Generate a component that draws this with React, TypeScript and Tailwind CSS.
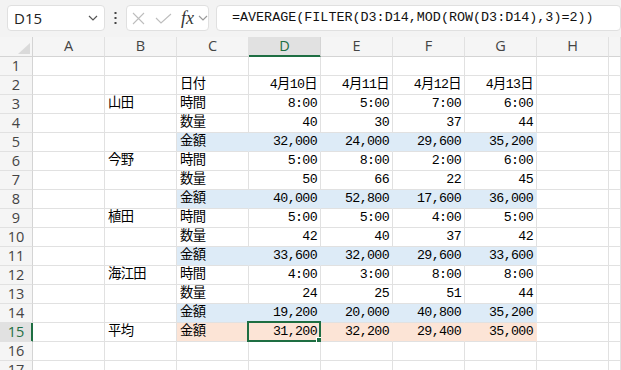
import React from "react";

type Fill = "none" | "blue" | "orange";
type Row = { n: number; b?: string; c?: string; v?: string[]; fill?: Fill };

const rows: Row[] = [
  { n: 1 },
  { n: 2, c: "日付", v: ["4月10日", "4月11日", "4月12日", "4月13日"] },
  { n: 3, b: "山田", c: "時間", v: ["8:00", "5:00", "7:00", "6:00"] },
  { n: 4, c: "数量", v: ["40", "30", "37", "44"] },
  { n: 5, c: "金額", v: ["32,000", "24,000", "29,600", "35,200"], fill: "blue" },
  { n: 6, b: "今野", c: "時間", v: ["5:00", "8:00", "2:00", "6:00"] },
  { n: 7, c: "数量", v: ["50", "66", "22", "45"] },
  { n: 8, c: "金額", v: ["40,000", "52,800", "17,600", "36,000"], fill: "blue" },
  { n: 9, b: "植田", c: "時間", v: ["5:00", "5:00", "4:00", "5:00"] },
  { n: 10, c: "数量", v: ["42", "40", "37", "42"] },
  { n: 11, c: "金額", v: ["33,600", "32,000", "29,600", "33,600"], fill: "blue" },
  { n: 12, b: "海江田", c: "時間", v: ["4:00", "3:00", "8:00", "8:00"] },
  { n: 13, c: "数量", v: ["24", "25", "51", "44"] },
  { n: 14, c: "金額", v: ["19,200", "20,000", "40,800", "35,200"], fill: "blue" },
  { n: 15, b: "平均", c: "金額", v: ["31,200", "32,200", "29,400", "35,000"], fill: "orange" },
  { n: 16 },
  { n: 17 },
];

const cols = ["A", "B", "C", "D", "E", "F", "G", "H", ""];

function Chevron({ color }: { color: string }) {
  return (
    <svg width="10" height="6" viewBox="0 0 10 6" fill="none">
      <path d="M1 1 L5 5 L9 1" stroke={color} strokeWidth="1.2" />
    </svg>
  );
}

function Cell({
  text,
  align,
  fill,
  selected,
}: {
  text?: string;
  align: "left" | "right";
  fill?: Fill;
  selected?: boolean;
}) {
  const bg =
    fill === "blue"
      ? "bg-[#ddebf7] border-r-[#ddebf7]"
      : fill === "orange"
      ? "bg-[#fce4d6] border-r-[#fce4d6]"
      : "bg-white border-r-[#e1e1e1]";
  return (
    <div
      className={`relative h-[19px] border-r border-b border-b-[#e1e1e1] ${bg} flex items-center px-[3px] ${
        align === "right" ? "justify-end" : "justify-start"
      }`}
    >
      <span className="whitespace-nowrap text-[13.3px] leading-none tracking-[-0.65px] text-[#000] font-['Liberation_Mono','Noto_Sans_CJK_JP',monospace]">
        {text}
      </span>
      {selected && (
        <>
          <div className="absolute left-[-2px] top-[-2px] right-[-1px] bottom-[-1px] border-2 border-[#1e6e42] pointer-events-none" />
          <div className="absolute right-[-3px] bottom-[-3px] w-[7px] h-[7px] bg-[#1e6e42] border border-white" />
        </>
      )}
    </div>
  );
}

export default function App() {
  return (
    <div className="w-[621px] h-[370px] overflow-hidden bg-white font-['Open_Sans','Noto_Sans',sans-serif]">
      {/* formula bar */}
      <div className="h-[37px] bg-[#f3f3f3] flex items-start pt-[5px] pl-[7px]">
        <div className="w-[101px] h-[26px] rounded-[4px] border border-[#e0e0e0] bg-white flex items-center pl-[6px] pr-[6px] justify-between">
          <span className="text-[15px] text-[#222] leading-none">D15</span>
          <Chevron color="#555" />
        </div>
        <div className="w-[22px] h-[26px] flex items-center justify-center">
          <svg width="3" height="12" viewBox="0 0 3 12">
            <rect x="0.5" y="0" width="2" height="2" fill="#444" />
            <rect x="0.5" y="5" width="2" height="2" fill="#444" />
            <rect x="0.5" y="10" width="2" height="2" fill="#444" />
          </svg>
        </div>
        <div className="w-[83px] h-[26px] rounded-[4px] border border-[#e0e0e0] bg-white flex items-center pl-[5px]">
          <svg width="13" height="13" viewBox="0 0 13 13" fill="none">
            <path d="M1 1 L12 12 M12 1 L1 12" stroke="#bdbdbd" strokeWidth="1.1" />
          </svg>
          <svg width="17" height="11" viewBox="0 0 17 11" fill="none" className="ml-[10px]">
            <path d="M1 5 L6 10 L16 1" stroke="#bdbdbd" strokeWidth="1.1" />
          </svg>
          <span className="ml-[9px] text-[18px] leading-none italic text-[#333] font-['Liberation_Serif',serif]">
            fx
          </span>
          <span className="ml-[4px] flex items-center">
            <Chevron color="#9a9a9a" />
          </span>
        </div>
        <div className="ml-[7px] w-[420px] h-[26px] rounded-[4px] border border-[#e0e0e0] bg-white flex items-center pl-[15px]">
          <span className="text-[13.4px] leading-none text-[#111] whitespace-nowrap font-['Liberation_Mono',monospace]">
            =AVERAGE(FILTER(D3:D14,MOD(ROW(D3:D14),3)=2))
          </span>
        </div>
      </div>

      {/* grid */}
      <div className="grid grid-cols-[33px_repeat(8,72px)_1fr]">
        {/* header row */}
        <div className="relative h-[20px] bg-[#f5f5f5] border-r border-b border-[#d4d4d4]">
          <svg width="12" height="11" viewBox="0 0 12 11" className="absolute left-[18px] top-[6px]">
            <path d="M12 0 L12 11 L0 11 Z" fill="#dadada" />
          </svg>
        </div>
        {cols.map((c, i) => {
          const sel = c === "D";
          return (
            <div
              key={i}
              className={`h-[20px] flex items-center justify-center text-[14.5px] leading-none ${
                sel
                  ? "bg-[#e1e1e1] text-[#1e6e42] border-b border-b-[#1e6e42] shadow-[inset_0_-1px_0_#1e6e42] border-r border-r-[#d4d4d4]"
                  : "bg-[#f5f5f5] text-[#444] border-r border-b border-[#e1e1e1] border-b-[#d4d4d4]"
              }`}
            >
              {c}
            </div>
          );
        })}
        {rows.map((r) => {
          const sel = r.n === 15;
          return (
            <React.Fragment key={r.n}>
              <div
                className={`h-[19px] flex items-center justify-center text-[14.5px] leading-none border-b border-b-[#e1e1e1] ${
                  sel
                    ? "bg-[#e1e1e1] text-[#1e6e42] border-r border-r-[#1e6e42] shadow-[inset_-1px_0_0_#1e6e42]"
                    : "bg-[#f5f5f5] text-[#444] border-r border-r-[#d4d4d4]"
                }`}
              >
                {r.n}
              </div>
              <Cell align="left" />
              <Cell align="left" text={r.b} />
              <Cell align="left" text={r.c} fill={r.fill} />
              {[0, 1, 2, 3].map((k) => (
                <Cell
                  key={k}
                  align="right"
                  text={r.v ? r.v[k] : undefined}
                  fill={r.fill}
                  selected={sel && k === 0}
                />
              ))}
              <Cell align="left" />
              <Cell align="left" />
            </React.Fragment>
          );
        })}
      </div>
    </div>
  );
}
